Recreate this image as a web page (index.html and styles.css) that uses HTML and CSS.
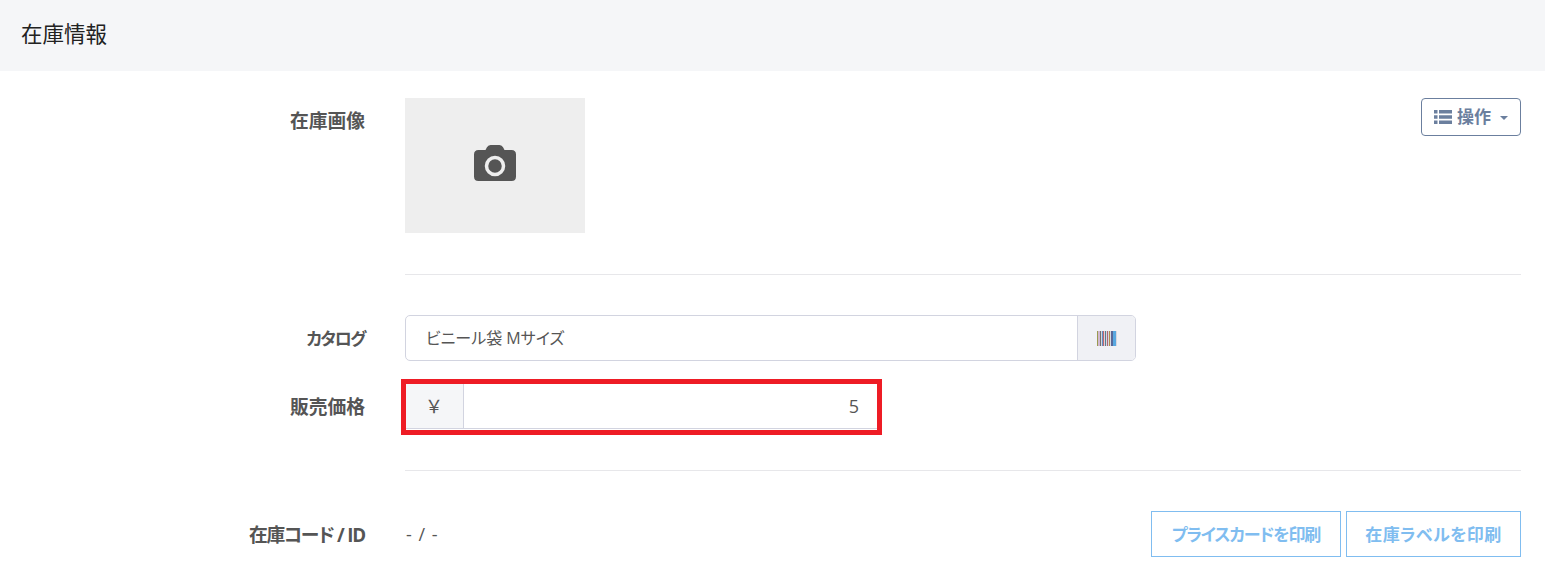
FILE: index.html
```html
<!DOCTYPE html>
<html lang="ja">
<head>
<meta charset="utf-8">
<title>在庫情報</title>
<link rel="stylesheet" href="styles.css">
</head>
<body>
<header class="page-head"><h1 class="page-title">在庫情報</h1></header>
<main class="panel">
  <section class="row row-image">
    <div class="label label-image">在庫画像</div>
    <div class="content content-image">
      <div class="photo">
        <svg class="camera" width="42" height="36" viewBox="0 0 42 36" aria-hidden="true">
          <path fill="#555" d="M11.500 5 L12.800 2.500 Q14 0 16.500 0 H25.500 Q28 0 29.200 2.500 L30.500 5 H37.500 Q42 5 42 9.500 V31.500 Q42 36 37.500 36 H4.500 Q0 36 0 31.500 V9.500 Q0 5 4.500 5 Z"/>
          <circle cx="21" cy="21" r="8.500" fill="#555" stroke="#eee" stroke-width="3.500"/>
        </svg>
      </div>
      <button class="btn-ops" type="button">
        <svg class="list-icon" width="18" height="14" viewBox="0 0 18 14" aria-hidden="true">
          <path fill="#6b7f9e" d="M0 0h3.500v3.500H0zM5 0h13v3.500H5zM0 5.250h3.500v3.500H0zM5 5.250h13v3.500H5zM0 10.500h3.500v3.500H0zM5 10.500h13v3.500H5z"/>
        </svg>
        <span>操作</span>
        <i class="caret"></i>
      </button>
    </div>
  </section>
  <hr class="divider divider-one">
  <section class="row row-catalog">
    <div class="label label-catalog">カタログ</div>
    <div class="content">
      <div class="catalog-group">
        <div class="catalog-input">ビニール袋 Mサイズ</div>
        <div class="catalog-addon">
          <svg width="20" height="15" viewBox="0 0 20 15" aria-hidden="true">
            <rect width="20" height="15" fill="#d8d8e0"/>
            <path fill="#9a9a50" d="M0 0h1v15H0z"/>
            <path fill="#d0b8d0" d="M1 0h2v15H1z"/>
            <path fill="#707070" d="M3 0h1v15H3z"/>
            <path fill="#5f8fc8" d="M5 0h1v15H5z"/>
            <path fill="#c06868" d="M6 0h1v15H6z"/>
            <path fill="#e0d0e0" d="M7 0h1v15H7z"/>
            <path fill="#5a7f8f" d="M8 0h1v15H8z"/>
            <path fill="#b06878" d="M10 0h1v15H10z"/>
            <path fill="#b09050" d="M12 0h1v15H12z"/>
            <path fill="#586898" d="M14 0h2v15H14z"/>
            <path fill="#58a8e0" d="M16 0h3v15H16z"/>
          </svg>
        </div>
      </div>
    </div>
  </section>
  <section class="row row-price">
    <div class="label">販売価格</div>
    <div class="content">
      <div class="price-group">
        <div class="price-addon">￥</div>
        <div class="price-input">5</div>
      </div>
    </div>
  </section>
  <hr class="divider divider-two">
  <section class="row row-code">
    <div class="label label-code">在庫コード / ID</div>
    <div class="content content-code">
      <div class="code-value">- / -</div>
      <div class="print-actions">
        <button class="btn-print btn-price" type="button">プライスカードを印刷</button>
        <button class="btn-print btn-stock" type="button">在庫ラベルを印刷</button>
      </div>
    </div>
  </section>
</main>
</body>
</html>
```
FILE: styles.css
```css
*, *::after { box-sizing: border-box; }
html, body { margin: 0; padding: 0; }
body {
  width: 1545px;
  height: 573px;
  overflow: hidden;
  background: #fff;
  color: #555;
  font-family: "Open Sans", "Noto Sans CJK JP", sans-serif;
  font-size: 17px;
  font-feature-settings: "palt";
}
.page-head {
  height: 71px;
  background: #f5f6f8;
  display: flex;
  align-items: center;
  padding: 0 0 7px 21px;
}
.page-title {
  margin: 0;
  font-size: 21.500px;
  font-weight: 400;
  color: #222;
}
.panel { padding: 27px 24px 0 0; }
.row { display: flex; }
.label {
  width: 365px;
  flex: none;
  text-align: right;
  font-weight: 700;
  font-size: 18.750px;
  color: #555;
  margin-top: -2px;
}
.label-catalog { font-size: 17px; letter-spacing: -1.500px; }
.label-code { letter-spacing: -1.200px; }
.content { margin-left: 40px; flex: 1; }
.row-image { height: 135px; }
.label-image { padding-top: 9px; line-height: 27px; margin-top: 0; }
.content-image { display: flex; justify-content: space-between; align-items: flex-start; }
.photo {
  width: 180px;
  height: 135px;
  background: #eee;
  display: flex;
  align-items: center;
  justify-content: center;
}
.camera { margin-top: -6px; }
.btn-ops {
  width: 100px;
  height: 38px;
  border: 1px solid #6b7f9e;
  border-radius: 4px;
  background: #fff;
  color: #6b7f9e;
  font: 700 17px "Open Sans", "Noto Sans CJK JP", sans-serif;
  display: flex;
  align-items: center;
  padding: 0 0 0 12px;
}
.btn-ops span { margin-left: 5px; line-height: 24px; }
.caret {
  margin-left: 9px;
  margin-top: 2px;
  border-top: 4px solid #6b7f9e;
  border-left: 4px solid transparent;
  border-right: 4px solid transparent;
}
.divider {
  margin: 41px 0 0 405px;
  border: 0;
  border-top: 1px solid #e7e7ea;
  height: 0;
}
.row-catalog { margin-top: 40px; height: 46px; align-items: center; }
.catalog-group {
  width: 731px;
  height: 46px;
  display: flex;
  border: 1px solid #d2d4e0;
  border-radius: 5px;
}
.catalog-input {
  flex: 1;
  padding-left: 20px;
  line-height: 44px;
  font-size: 16px;
  color: #555;
}
.catalog-addon {
  width: 58px;
  background: #f0f1f5;
  border-left: 1px solid #d2d4e0;
  border-radius: 0 4px 4px 0;
  display: flex;
  align-items: center;
  justify-content: center;
}
.row-price { margin-top: 22px; height: 46px; align-items: center; }
.price-group {
  position: relative;
  width: 472px;
  height: 46px;
  display: flex;
  border-bottom: 1px solid #d2d4e0;
}
.price-group::after {
  content: "";
  position: absolute;
  left: -4px;
  top: -4px;
  width: 481px;
  height: 56px;
  border: 5px solid #ee1c25;
}
.price-addon {
  width: 59px;
  background: #f5f6f8;
  border-right: 1px solid #d2d4e0;
  text-align: center;
  line-height: 46px;
  font-size: 18px;
}
.price-input {
  flex: 1;
  text-align: right;
  padding-right: 18px;
  line-height: 46px;
  font-size: 18px;
}
.divider-two { margin-top: 41px; }
.row-code { margin-top: 40px; height: 46px; align-items: center; }
.content-code { display: flex; justify-content: space-between; align-items: center; }
.code-value { font-size: 18px; letter-spacing: 0.500px; word-spacing: 1px; padding-left: 1px; }
.print-actions { display: flex; gap: 5px; }
.btn-print {
  height: 46px;
  border: 1px solid #80bdf0;
  background: #fff;
  color: #80bdf0;
  font: 700 17px "Open Sans", "Noto Sans CJK JP", sans-serif;
  font-feature-settings: "palt";
  padding: 0 0 2px;
}
.btn-price { width: 190px; letter-spacing: -1.100px; }
.btn-stock { width: 175px; letter-spacing: 0.400px; }
```
